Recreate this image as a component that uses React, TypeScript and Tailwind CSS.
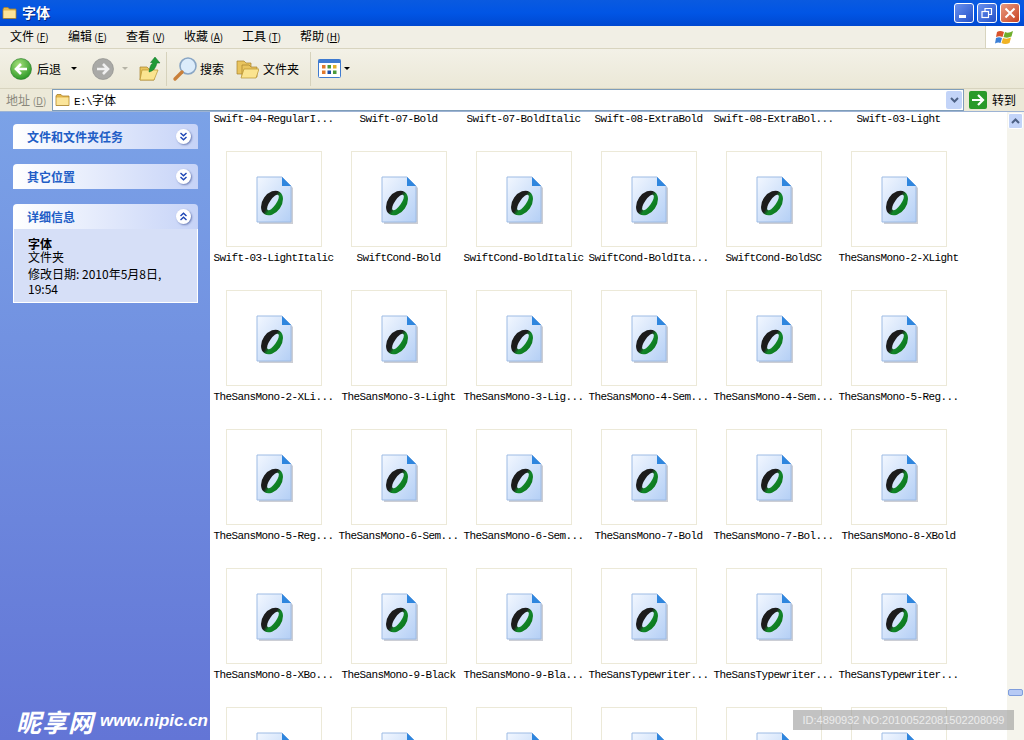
import React from 'react'

const rows = [
  ['Swift-04-RegularI...', 'Swift-07-Bold', 'Swift-07-BoldItalic', 'Swift-08-ExtraBold', 'Swift-08-ExtraBol...', 'Swift-03-Light'],
  ['Swift-03-LightItalic', 'SwiftCond-Bold', 'SwiftCond-BoldItalic', 'SwiftCond-BoldIta...', 'SwiftCond-BoldSC', 'TheSansMono-2-XLight'],
  ['TheSansMono-2-XLi...', 'TheSansMono-3-Light', 'TheSansMono-3-Lig...', 'TheSansMono-4-Sem...', 'TheSansMono-4-Sem...', 'TheSansMono-5-Reg...'],
  ['TheSansMono-5-Reg...', 'TheSansMono-6-Sem...', 'TheSansMono-6-Sem...', 'TheSansMono-7-Bold', 'TheSansMono-7-Bol...', 'TheSansMono-8-XBold'],
  ['TheSansMono-8-XBo...', 'TheSansMono-9-Black', 'TheSansMono-9-Bla...', 'TheSansTypewriter...', 'TheSansTypewriter...', 'TheSansTypewriter...'],
]

const cjk = { fontFamily: '"Noto Sans CJK SC", "Liberation Sans", sans-serif' }
const mono = { fontFamily: '"Liberation Mono", "Noto Sans CJK SC", monospace' }

const Folder = ({ size = 16 }: { size?: number }) => (
  <svg width={size} height={size} viewBox="0 0 16 16" className="shrink-0">
    <path d="M1 4 L2 2.5 H6 L7.5 4 H14 V13.5 H1 Z" fill="#e3b64a" stroke="#a8822c" strokeWidth="0.8" />
    <path d="M1.5 5.5 H13.5 V13 H1.5 Z" fill="#fbe59a" />
  </svg>
)

const FontIcon = () => (
  <svg width="40" height="50" viewBox="0 0 40 50">
    <defs>
      <linearGradient id="pg" x1="0" y1="0" x2="1" y2="1">
        <stop offset="0" stopColor="#f2f7ff" />
        <stop offset="1" stopColor="#b4cff5" />
      </linearGradient>
      <linearGradient id="og" x1="0" y1="0.5" x2="1" y2="0.5">
        <stop offset="0.4" stopColor="#1c1c1c" />
        <stop offset="0.62" stopColor="#12862a" />
        <stop offset="1" stopColor="#0c7a1d" />
      </linearGradient>
    </defs>
    <path d="M4 4 H29 L38 13 V49 H4 Z" fill="#7f8496" opacity="0.4" />
    <path d="M2 2 H27 L36 11 V47 H2 Z" fill="url(#pg)" stroke="#9dbbe4" strokeWidth="1" />
    <path d="M27 2 L36 11 H27 Z" fill="#2f86de" />
    <ellipse cx="17" cy="28" rx="9.5" ry="13.5" fill="url(#og)" transform="rotate(35 17 28)" />
    <ellipse cx="18" cy="27.5" rx="3.2" ry="9.2" fill="#d4e5fb" transform="rotate(35 18 27.5)" />
  </svg>
)

const Thumb = () => (
  <div className="mx-auto w-[96px] h-[96px] border border-[#ece9d8] flex items-center justify-center pl-[2px] pt-[1px]">
    <FontIcon />
  </div>
)

const Label = ({ text }: { text: string }) => (
  <div className="h-3 leading-3 text-center text-[11px] tracking-[-0.6px] text-black whitespace-nowrap" style={mono}>
    {text}
  </div>
)

const Chevrons = ({ up = false }: { up?: boolean }) => (
  <div className="w-[15px] h-[15px] rounded-full bg-white shadow-[1px_1px_2px_rgba(50,70,140,0.6)] flex items-center justify-center">
    <svg width="9" height="9" viewBox="0 0 9 9" fill="none" stroke="#1c45b4" strokeWidth="1.4">
      {up ? <path d="M1.5 4 L4.5 1.2 L7.5 4 M1.5 8 L4.5 5.2 L7.5 8" /> : <path d="M1.5 1 L4.5 3.8 L7.5 1 M1.5 5 L4.5 7.8 L7.5 5" />}
    </svg>
  </div>
)

const PanelHead = ({ title, up }: { title: string; up?: boolean }) => (
  <div className="h-[25px] rounded-t-[4px] bg-gradient-to-r from-white to-[#c6d3f7] flex items-center justify-between pl-[14px] pr-[7px]">
    <span className="text-[12px] font-bold text-[#215dc6]" style={cjk}>{title}</span>
    <Chevrons up={up} />
  </div>
)

const Menu = ({ name, k }: { name: string; k: string }) => (
  <span className="text-[12px] leading-[14px] text-black w-[58px] whitespace-nowrap -mt-[2px]" style={cjk}>
    {name}<span className="text-[10px]"> (<span className="underline">{k}</span>)</span>
  </span>
)

const Caret = ({ color = '#000' }: { color?: string }) => (
  <svg width="6" height="3" viewBox="0 0 6 3"><path d="M0 0 H6 L3 3 Z" fill={color} /></svg>
)

const WinButton = ({ children, red = false }: { children: React.ReactNode; red?: boolean }) => (
  <div className={`w-[20px] h-[20px] rounded-[3px] border border-white flex items-center justify-center ${red ? 'bg-gradient-to-br from-[#e89a80] to-[#c8401c]' : 'bg-gradient-to-br from-[#6a90ee] to-[#2350c8]'}`}>
    {children}
  </div>
)

const App = () => {
  return (
    <div className="w-[1024px] h-[740px] overflow-hidden relative flex flex-col bg-white">
      {/* title bar */}
      <div className="h-[26px] shrink-0 bg-gradient-to-b from-[#0a5ae0] via-[#0155e5] to-[#0048d0] flex items-center pl-[2px] pr-[3px]">
        <Folder size={16} />
        <span className="ml-1 text-[14px] leading-[18px] -mt-[2px] font-bold text-white [text-shadow:1px_1px_#0a2a80]" style={cjk}>字体</span>
        <div className="ml-auto flex gap-[3px] mr-[1px]">
          <WinButton>
            <div className="w-[7px] h-[3px] bg-white mt-[7px] mr-[3px]" />
          </WinButton>
          <WinButton>
            <svg width="12" height="12" viewBox="0 0 12 12" fill="none" stroke="#fff" strokeWidth="1.2">
              <rect x="1" y="4.5" width="6.5" height="6" />
              <path d="M4 4 V1.5 H10.5 V7.5 H8" />
            </svg>
          </WinButton>
          <WinButton red>
            <svg width="12" height="12" viewBox="0 0 12 12" stroke="#fff" strokeWidth="2"><path d="M1.5 1.5 L10.5 10.5 M10.5 1.5 L1.5 10.5" /></svg>
          </WinButton>
        </div>
      </div>

      {/* menu bar */}
      <div className="h-[23px] shrink-0 bg-[#f1efe5] border-b border-[#d8d4bf] flex items-center pl-[10px] relative">
        <Menu name="文件" k="F" />
        <Menu name="编辑" k="E" />
        <Menu name="查看" k="V" />
        <Menu name="收藏" k="A" />
        <Menu name="工具" k="T" />
        <Menu name="帮助" k="H" />
        <div className="ml-auto h-full w-[39px] bg-white border-l border-[#d8d4bf] flex items-center justify-center">
          <svg width="20" height="20" viewBox="0 0 20 20">
            <path d="M2 5 Q5 3 9 5 L7.5 10 Q4.5 8.5 1 10 Z" fill="#d9532b" />
            <path d="M10 5 Q13 7 18 4 L16.5 9.5 Q12.5 11.5 8.5 10 Z" fill="#6fae2c" />
            <path d="M1 11 Q4 9.5 7 11 L5.5 16 Q3 15 0 16.5 Z" fill="#3b7fd6" />
            <path d="M8 11 Q12 12.5 16 10.5 L14.5 16 Q10 18 6.5 16 Z" fill="#f0b323" />
          </svg>
        </div>
      </div>

      {/* toolbar */}
      <div className="h-[40px] shrink-0 bg-gradient-to-b from-[#f3f1e7] to-[#ebe8d7] border-b border-[#d8d4bf] flex items-center pl-[10px]">
        <svg width="22" height="22" viewBox="0 0 22 22" className="shrink-0">
          <defs>
            <radialGradient id="gb" cx="0.4" cy="0.3" r="0.8">
              <stop offset="0" stopColor="#a6e07a" />
              <stop offset="1" stopColor="#1d8f1d" />
            </radialGradient>
          </defs>
          <circle cx="11" cy="11" r="10.5" fill="url(#gb)" stroke="#2c7a2c" strokeWidth="0.6" />
          <path d="M17 11 H7 M11 6 L6 11 L11 16" fill="none" stroke="#fff" strokeWidth="2.6" />
        </svg>
        <span className="ml-[5px] text-[12px] text-black w-[24px]" style={cjk}>后退</span>
        <div className="ml-[10px]"><Caret /></div>
        <svg width="22" height="22" viewBox="0 0 22 22" className="ml-[15px] shrink-0">
          <circle cx="11" cy="11" r="10.5" fill="#a9a9a6" stroke="#8c8c88" strokeWidth="0.6" />
          <path d="M5 11 H15 M11 6 L16 11 L11 16" fill="none" stroke="#f0f0f0" strokeWidth="2.6" />
        </svg>
        <div className="ml-[8px]"><Caret color="#b5b3a6" /></div>
        <svg width="22" height="26" viewBox="0 0 22 26" className="ml-[11px] shrink-0">
          <path d="M1 11 H8 L10 13 H15 V24 H1 Z" fill="#e9c45d" stroke="#a8822c" strokeWidth="0.7" />
          <path d="M3 14 H19 L15 24 H1 Z" fill="#fbe48f" stroke="#b8922f" strokeWidth="0.7" />
          <path d="M10 16 C11 10 12 8 14 7 L11.5 6.5 L16 1 L21 7 L18 7 C17 11 15 15 10 16 Z" fill="#1e9a35" stroke="#11702a" strokeWidth="0.5" />
        </svg>
        <div className="ml-[5px] w-px h-[34px] bg-[#d6d2bc]" />
        <svg width="26" height="26" viewBox="0 0 26 26" className="ml-[5px] shrink-0">
          <circle cx="16" cy="10" r="8" fill="#dcecfb" stroke="#8aa6c4" strokeWidth="1.6" />
          <path d="M10 16 L3 23" stroke="#c9803a" strokeWidth="3.4" strokeLinecap="round" />
        </svg>
        <span className="ml-[2px] text-[12px] text-black w-[24px]" style={cjk}>搜索</span>
        <svg width="23" height="20" viewBox="0 0 23 20" className="ml-[12px] shrink-0">
          <path d="M1 2 H8 L10 4 H15 V15 H1 Z" fill="#e9c45d" stroke="#a8822c" strokeWidth="0.7" />
          <path d="M6 6 H13 L15 8 H21 V18 H6 Z" fill="#e9c45d" stroke="#a8822c" strokeWidth="0.7" />
          <path d="M8 10 H23 L20 19 H5 Z" fill="#fbe48f" stroke="#b8922f" strokeWidth="0.7" />
        </svg>
        <span className="ml-[4px] text-[12px] text-black w-[36px]" style={cjk}>文件夹</span>
        <div className="ml-[11px] w-px h-[34px] bg-[#d6d2bc]" />
        <svg width="23" height="19" viewBox="0 0 23 19" className="ml-[7px] shrink-0">
          <rect x="0.5" y="0.5" width="22" height="18" rx="1" fill="#fff" stroke="#3f7bd0" />
          <rect x="0.5" y="0.5" width="22" height="3.5" fill="#3f7bd0" />
          <rect x="4" y="6" width="3.5" height="3.5" fill="#e0792b" />
          <rect x="9.5" y="6" width="3.5" height="3.5" fill="#4c9a3a" />
          <rect x="15" y="6" width="3.5" height="3.5" fill="#e0b02b" />
          <rect x="4" y="11.5" width="3.5" height="3.5" fill="#e0792b" />
          <rect x="9.5" y="11.5" width="3.5" height="3.5" fill="#1d4fa8" />
          <rect x="15" y="11.5" width="3.5" height="3.5" fill="#4c9a3a" />
        </svg>
        <div className="ml-[3px]"><Caret /></div>
      </div>

      {/* address bar */}
      <div className="h-[22px] shrink-0 bg-[#ece9d8] flex items-center">
        <span className="ml-[6px] w-[46px] text-[12px] text-[#8a887c] whitespace-nowrap" style={cjk}>地址 <span className="text-[10px]">(<span className="underline">D</span>)</span></span>
        <div className="w-[912px] h-[22px] bg-white border border-[#7f9db9] flex items-center pl-[2px] pr-px">
          <Folder size={16} />
          <span className="ml-[3px] text-[12px] mt-[2px] text-black" style={mono}><span className="text-[11px] tracking-[-0.6px]">E:\</span><span style={cjk}>字体</span></span>
          <div className="ml-auto w-[16px] h-[18px] rounded-[2px] bg-[#c3d4f8] flex items-center justify-center">
            <svg width="9" height="6" viewBox="0 0 9 6" fill="none" stroke="#4d6185" strokeWidth="2"><path d="M1 1 L4.5 4.5 L8 1" /></svg>
          </div>
        </div>
        <svg width="18" height="18" viewBox="0 0 18 18" className="ml-[5px] shrink-0">
          <rect width="18" height="18" rx="2" fill="#2a9a2a" />
          <path d="M3 9 H13 M9 4 L14 9 L9 14" fill="none" stroke="#fff" strokeWidth="2.2" />
        </svg>
        <span className="ml-[5px] text-[12px] text-black" style={cjk}>转到</span>
      </div>

      <div className="flex-1 min-h-0 flex border-t border-[#9db3d4]">
        {/* task pane */}
        <div className="w-[210px] shrink-0 bg-gradient-to-b from-[#7ba2e7] to-[#6375d6] pt-[12px] px-[13px] pr-[12px] flex flex-col gap-[15px]">
          <PanelHead title="文件和文件夹任务" />
          <PanelHead title="其它位置" />
          <div>
            <PanelHead title="详细信息" up />
            <div className="h-[74px] bg-[#d6dff7] border border-t-0 border-white pl-[14px] pt-[8px] text-[12px] leading-[13px] text-black" style={cjk}>
              <div className="font-bold">字体</div>
              <div>文件夹</div>
              <div className="mt-[3px] leading-[15px] w-[150px]">修改日期: 2010年5月8日, 19:54</div>
            </div>
          </div>
        </div>

        {/* icon view */}
        <div className="flex-1 min-w-0 overflow-hidden pl-[1px] pt-px">
          <div className="grid grid-cols-[repeat(6,125px)]">
            {rows[0].map((t, i) => (
              <div key={i} className="mb-[26px]"><Label text={t} /></div>
            ))}
            {rows.slice(1).map((row, r) =>
              row.map((t, i) => (
                <div key={`${r}-${i}`} className="mb-[26px]">
                  <Thumb />
                  <div className="mt-[5px]"><Label text={t} /></div>
                </div>
              ))
            )}
            {rows[0].map((_, i) => (
              <div key={i}><Thumb /></div>
            ))}
          </div>
        </div>

        {/* scrollbar */}
        <div className="w-[17px] shrink-0 bg-[#f5f4ec] pt-px pl-px">
          <div className="w-[15px] h-[16px] rounded-[2px] bg-[#c3d4f8] border border-white flex items-center justify-center">
            <svg width="9" height="6" viewBox="0 0 9 6" fill="none" stroke="#4d6185" strokeWidth="2"><path d="M1 5 L4.5 1.5 L8 5" /></svg>
          </div>
          <div className="mt-[560px] w-[15px] h-[7px] rounded-[2px] bg-[#b7caf5] border border-[#7f9ddc]" />
        </div>
      </div>

      {/* watermarks */}
      <div className="absolute left-[16px] bottom-[6px] w-[198px] whitespace-nowrap text-white italic font-bold flex items-center">
        <span className="text-[25px] leading-[26px] tracking-[1px]" style={cjk}>昵享网</span>
        <span className="ml-[6px] text-[17px]" style={{ fontFamily: '"Liberation Sans", sans-serif' }}>www.nipic.cn</span>
      </div>
      <div className="absolute left-[793px] top-[710px] w-[221px] h-[20px] bg-[#9a9a9a]/60 text-[#ececec] text-[11px] leading-[20px] text-center whitespace-nowrap" style={{ fontFamily: '"Liberation Sans", sans-serif' }}>
        ID:4890932 NO:20100522081502208099
      </div>
    </div>
  )
}

export default App
